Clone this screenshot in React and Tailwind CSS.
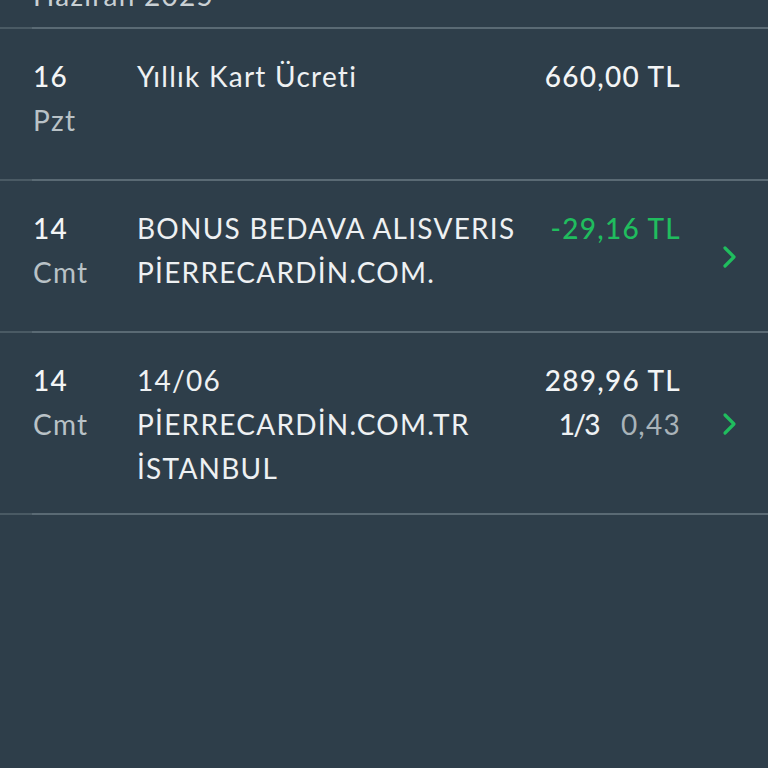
import React from "react";

function Divider() {
  return (
    <div className="flex h-[2px]">
      <div className="w-[32px] bg-[#4a5a64]" />
      <div className="flex-1 bg-[#5a6a74]" />
    </div>
  );
}

function Chevron() {
  return (
    <svg width="16" height="24" viewBox="0 0 16 24" fill="none">
      <path d="M3 3 L12 12 L3 21" stroke="#20bd5e" strokeWidth="3.2" strokeLinecap="round" strokeLinejoin="round" />
    </svg>
  );
}

function Row({ day, dow, lines, amount, amountClass, extra, chevron }) {
  return (
    <div className="flex min-h-[150px] pt-[25px] pb-[23px] leading-[44px]">
      <div className="w-[137px] pl-[33px] shrink-0">
        <div className="text-[#f3f5f6] font-medium">{day}</div>
        <div className="text-[#b9c2c7]">{dow}</div>
      </div>
      <div className="flex-1 text-[#eef1f3]">
        {lines.map((l, i) => (
          <div key={i}>{l}</div>
        ))}
      </div>
      <div className="flex flex-col items-end shrink-0 -mr-[1px]">
        <div className={amountClass}>{amount}</div>
        {extra}
      </div>
      <div className="w-[88px] shrink-0 flex items-center pl-[42px]">
        {chevron ? <Chevron /> : null}
      </div>
    </div>
  );
}

export default function App() {
  return (
    <div
      className="w-[768px] h-[768px] bg-[#2e3e4a] overflow-hidden text-[28px] tracking-[0.045em]"
      style={{ fontFamily: "Lato, 'Open Sans', sans-serif" }}
    >
      <div className="h-[27px] overflow-hidden">
        <div className="-mt-[27px] pl-[33px] leading-[44px] text-[#c9d0d4]">Haziran 2025</div>
      </div>
      <Divider />
      <Row
        day="16"
        dow="Pzt"
        lines={["Yıllık Kart Ücreti"]}
        amount="660,00 TL"
        amountClass="text-[#f3f5f6] font-medium"
      />
      <Divider />
      <Row
        day="14"
        dow="Cmt"
        lines={["BONUS BEDAVA ALISVERIS", "PİERRECARDİN.COM."]}
        amount="-29,16 TL"
        amountClass="text-[#20bd5e] font-medium"
        chevron
      />
      <Divider />
      <Row
        day="14"
        dow="Cmt"
        lines={["14/06", "PİERRECARDİN.COM.TR", "İSTANBUL"]}
        amount="289,96 TL"
        amountClass="text-[#f3f5f6] font-medium"
        extra={
          <div className="flex gap-[22px]">
            <span className="text-[#eef1f3] font-medium tracking-[-0.06em]">1/3</span>
            <span className="text-[#a9b3b9]">0,43</span>
          </div>
        }
        chevron
      />
      <Divider />
    </div>
  );
}
